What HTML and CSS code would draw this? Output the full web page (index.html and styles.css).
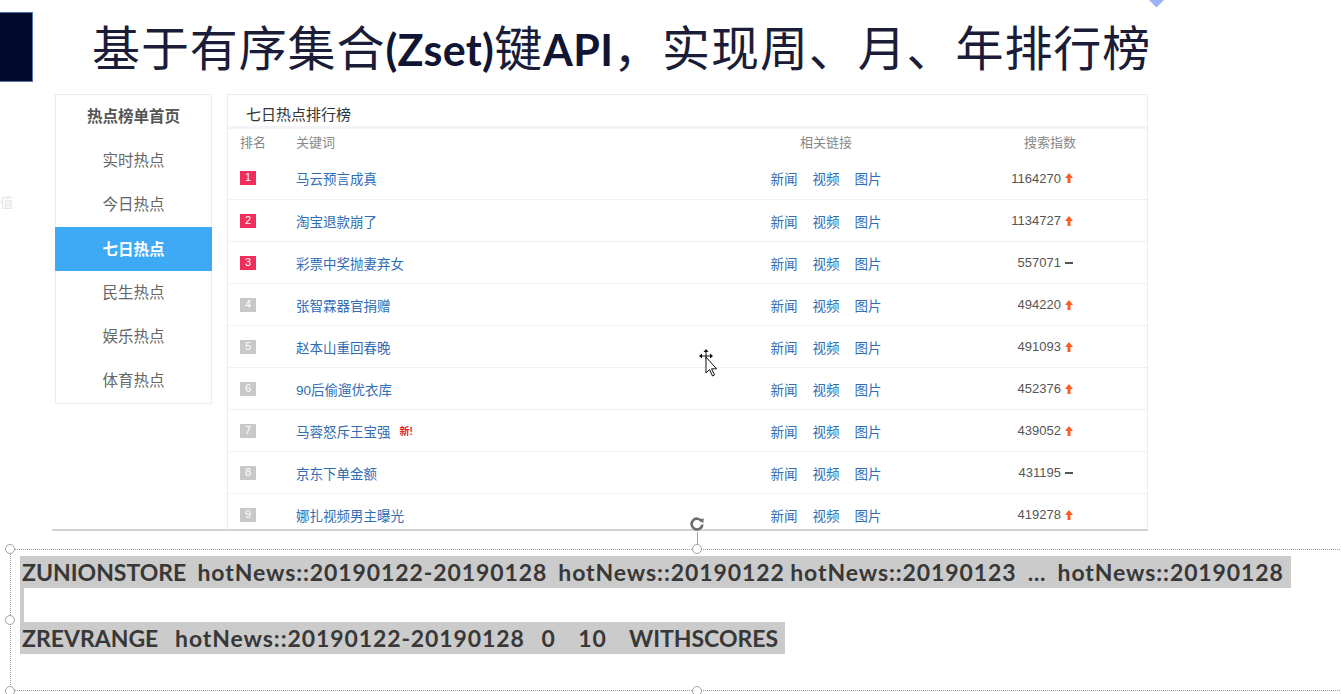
FILE: index.html
```html
<!DOCTYPE html>
<html lang="zh-CN">
<head>
<meta charset="utf-8">
<title>Zset 排行榜</title>
<link rel="stylesheet" href="styles.css">
</head>
<body>
<div class="slide">
  <div class="corner-logo"><span class="diamond"></span></div>
  <span class="edge-char">值</span>

  <header class="title-row">
    <div class="title-mark"></div>
    <h1 class="title">基于有序集合<b>(Zset)</b>键<b>API</b>，实现周、月、年排行榜</h1>
  </header>

  <div class="shot">
    <nav class="side">
      <div class="side-item side-head">热点榜单首页</div>
      <div class="side-item">实时热点</div>
      <div class="side-item">今日热点</div>
      <div class="side-item active">七日热点</div>
      <div class="side-item">民生热点</div>
      <div class="side-item">娱乐热点</div>
      <div class="side-item">体育热点</div>
    </nav>

    <section class="board">
      <div class="board-title">七日热点排行榜</div>
      <div class="grid head">
        <span>排名</span><span>关键词</span><span class="c">相关链接</span><span class="r">搜索指数</span>
      </div>

      <div class="grid row">
        <span><i class="rank hot">1</i></span>
        <span class="kw">马云预言成真</span>
        <span class="links"><a>新闻</a><a>视频</a><a>图片</a></span>
        <span class="num">1164270<svg class="up" viewBox="0 0 8 10"><polygon points="4,0 8,5 5.5,5 5.5,10 2.5,10 2.5,5 0,5"/></svg></span>
      </div>
      <div class="grid row">
        <span><i class="rank hot">2</i></span>
        <span class="kw">淘宝退款崩了</span>
        <span class="links"><a>新闻</a><a>视频</a><a>图片</a></span>
        <span class="num">1134727<svg class="up" viewBox="0 0 8 10"><polygon points="4,0 8,5 5.5,5 5.5,10 2.5,10 2.5,5 0,5"/></svg></span>
      </div>
      <div class="grid row">
        <span><i class="rank hot">3</i></span>
        <span class="kw">彩票中奖抛妻弃女</span>
        <span class="links"><a>新闻</a><a>视频</a><a>图片</a></span>
        <span class="num">557071<i class="flat"></i></span>
      </div>
      <div class="grid row">
        <span><i class="rank">4</i></span>
        <span class="kw">张智霖器官捐赠</span>
        <span class="links"><a>新闻</a><a>视频</a><a>图片</a></span>
        <span class="num">494220<svg class="up" viewBox="0 0 8 10"><polygon points="4,0 8,5 5.5,5 5.5,10 2.5,10 2.5,5 0,5"/></svg></span>
      </div>
      <div class="grid row">
        <span><i class="rank">5</i></span>
        <span class="kw">赵本山重回春晚</span>
        <span class="links"><a>新闻</a><a>视频</a><a>图片</a></span>
        <span class="num">491093<svg class="up" viewBox="0 0 8 10"><polygon points="4,0 8,5 5.5,5 5.5,10 2.5,10 2.5,5 0,5"/></svg></span>
      </div>
      <div class="grid row">
        <span><i class="rank">6</i></span>
        <span class="kw">90后偷遛优衣库</span>
        <span class="links"><a>新闻</a><a>视频</a><a>图片</a></span>
        <span class="num">452376<svg class="up" viewBox="0 0 8 10"><polygon points="4,0 8,5 5.5,5 5.5,10 2.5,10 2.5,5 0,5"/></svg></span>
      </div>
      <div class="grid row">
        <span><i class="rank">7</i></span>
        <span class="kw">马蓉怒斥王宝强<em class="new">新!</em></span>
        <span class="links"><a>新闻</a><a>视频</a><a>图片</a></span>
        <span class="num">439052<svg class="up" viewBox="0 0 8 10"><polygon points="4,0 8,5 5.5,5 5.5,10 2.5,10 2.5,5 0,5"/></svg></span>
      </div>
      <div class="grid row">
        <span><i class="rank">8</i></span>
        <span class="kw">京东下单金额</span>
        <span class="links"><a>新闻</a><a>视频</a><a>图片</a></span>
        <span class="num">431195<i class="flat"></i></span>
      </div>
      <div class="grid row">
        <span><i class="rank">9</i></span>
        <span class="kw">娜扎视频男主曝光</span>
        <span class="links"><a>新闻</a><a>视频</a><a>图片</a></span>
        <span class="num">419278<svg class="up" viewBox="0 0 8 10"><polygon points="4,0 8,5 5.5,5 5.5,10 2.5,10 2.5,5 0,5"/></svg></span>
      </div>
    </section>

    <svg class="cursor" viewBox="0 0 26 30" width="26" height="30">
      <g fill="#111">
        <polygon points="9,1 11.5,4 6.5,4"/>
        <polygon points="2,8 5,5.5 5,10.5"/>
        <polygon points="16,8 13,5.5 13,10.5"/>
        <rect x="8.5" y="3.5" width="1" height="8"/>
        <rect x="4.5" y="7.5" width="9" height="1"/>
      </g>
      <polygon points="9,9 9,25 12.5,21.5 15.5,28 17.5,27 14.5,20.8 19.5,20.8" fill="#fff" stroke="#111" stroke-width="1"/>
    </svg>
  </div>

  <div class="code-box">
    <div class="code-line"><span class="cmd">ZUNIONSTORE</span>  hotNews::20190122-20190128  hotNews::20190122 hotNews::20190123  …  hotNews::20190128</div>
    <div class="code-blank"></div>
    <div class="code-line"><span class="cmd">ZREVRANGE</span>   hotNews::20190122-20190128   0    10    <span class="cmd">WITHSCORES</span></div>

    <svg class="rot-icon" viewBox="0 0 16 16" width="16" height="16">
      <path d="M12.6 5.2 A5.4 5.4 0 1 0 13.4 8.6" fill="none" stroke="#6d6d6d" stroke-width="2.6"/>
      <polygon points="10.2,3.2 14.8,2.6 14.2,7.4" fill="#6d6d6d"/>
    </svg>
    <span class="rot-line"></span>
    <span class="handle h-tl"></span>
    <span class="handle h-tm"></span>
    <span class="handle h-ml"></span>
    <span class="handle h-bl"></span>
    <span class="handle h-bm"></span>
  </div>
</div>
</body>
</html>
```

FILE: styles.css
```css
html, body {
  margin: 0;
  padding: 0;
  background: #ffffff;
}

.slide {
  position: relative;
  width: 1341px;
  height: 694px;
  overflow: hidden;
  background: #ffffff;
  font-family: "Liberation Sans", "Noto Sans CJK SC", sans-serif;
}

/* faint fragments at the edges */
.corner-logo {
  position: absolute;
  left: 1148px;
  top: -13px;
}
.diamond {
  display: block;
  width: 17px;
  height: 17px;
  background: #9db2f4;
  transform: rotate(45deg);
}
.edge-char {
  position: absolute;
  left: 0;
  top: 192px;
  font: 13px "Noto Sans CJK SC", sans-serif;
  color: #e2e2e2;
}

/* title */
.title-row {
  display: flex;
  align-items: center;
  gap: 59px;
  margin-top: 12px;
  height: 70px;
}
.title-mark {
  width: 32px;
  height: 68px;
  background: #020a2c;
  border: 1px solid #5576ad;
  border-left: 0;
  flex: none;
}
.title {
  margin: 0;
  font-family: "Noto Sans CJK SC", sans-serif;
  font-weight: 400;
  font-size: 48px;
  line-height: 70px;
  color: #1b1d38;
  white-space: nowrap;
  letter-spacing: 0.9px;
}
.title b {
  font-family: "Lato", "Liberation Sans", sans-serif;
  font-weight: 700;
  font-size: 43px;
  color: #101533;
  letter-spacing: 0.3px;
}

/* screenshot of the web page */
.shot {
  position: relative;
  display: flex;
  align-items: flex-start;
  margin: 8px 0 0 52px;
  width: 1096px;
  height: 439px;
  border-bottom: 2px solid #d3d3d3;
  overflow: hidden;
}

.side {
  margin: 4px 0 0 3px;
  width: 155px;
  border: 1px solid #ececec;
  flex: none;
}
.side-item {
  height: 44px;
  line-height: 40px;
  text-align: center;
  font-family: "Noto Sans CJK SC", sans-serif;
  font-size: 15.5px;
  color: #666666;
}
.side-head {
  font-weight: 700;
  color: #555555;
}
.side-item.active {
  margin: 0 -1px;
  line-height: 43px;
  background: #3eaaf6;
  color: #ffffff;
  font-weight: 700;
}

.board {
  margin: 4px 0 0 15px;
  width: 919px;
  border: 1px solid #ececec;
  border-bottom: 0;
  flex: none;
  font-family: "Liberation Sans", "Noto Sans CJK SC", sans-serif;
}
.board-title {
  height: 27px;
  padding: 4px 0 0 18px;
  line-height: 29px;
  font-family: "Noto Sans CJK SC", sans-serif;
  font-size: 15px;
  color: #333333;
  border-bottom: 3px solid #f3f4f8;
}

.grid {
  display: grid;
  grid-template-columns: 56px 460px 140px 180px;
  align-items: center;
  padding-left: 12px;
}
.head {
  height: 28px;
  box-sizing: border-box;
  padding-bottom: 3px;
  font-size: 13px;
  color: #888888;
}
.head .c { text-align: center; }
.head .r { text-align: right; }

.row {
  height: 42px;
  box-sizing: border-box;
}
.row + .row {
  border-top: 1px dotted #e3e3e3;
}

.rank {
  display: block;
  width: 16px;
  height: 14px;
  line-height: 14px;
  text-align: center;
  font: normal 11px "Liberation Sans", sans-serif;
  color: #ffffff;
  background: #c8c8c8;
}
.rank.hot {
  background: #f02d5c;
}

.kw {
  font-size: 13.5px;
  color: #2f6db5;
  display: flex;
  align-items: center;
}
.new {
  margin-left: 9px;
  font-style: normal;
  font-weight: 700;
  font-size: 10px;
  color: #e6231d;
}

.links {
  display: flex;
  justify-content: center;
  gap: 15px;
  font-size: 13.5px;
  color: #2f6db5;
}

.num {
  display: flex;
  justify-content: flex-end;
  align-items: center;
  gap: 4px;
  padding-right: 3px;
  font-size: 13px;
  color: #555555;
}
.up {
  width: 8px;
  height: 10px;
  fill: #ff5d22;
}
.flat {
  display: block;
  width: 8px;
  height: 2px;
  background: #555555;
}

.cursor {
  position: absolute;
  left: 645px;
  top: 258px;
}

/* selected text box with the commands */
.code-box {
  position: relative;
  display: flex;
  flex-direction: column;
  align-items: flex-start;
  margin: 18px 0 0 10px;
  padding: 6px 0 0 9px;
  width: 1400px;
  height: 134px;
  border-top: 1px dotted #9a9a9a;
  border-left: 1px dotted #9a9a9a;
  border-bottom: 1px dotted #9a9a9a;
}
.code-line {
  height: 32px;
  line-height: 33px;
  padding: 0 7px 0 2px;
  background: #cbcbcb;
  font-family: "Lato", "Liberation Sans", sans-serif;
  font-weight: 700;
  font-size: 23px;
  color: #383838;
  white-space: pre;
  letter-spacing: 0.9px;
  word-spacing: -0.9px;
}
.cmd {
  letter-spacing: 0;
}
.code-blank {
  width: 4px;
  height: 34px;
  background: #cbcbcb;
}

.handle {
  position: absolute;
  width: 8px;
  height: 8px;
  border-radius: 50%;
  border: 1px solid #a3a3a3;
  background: #ffffff;
}
.h-tl { left: -6px; top: -6px; }
.h-tm { left: 681px; top: -6px; }
.h-ml { left: -6px; top: 65px; }
.h-bl { left: -6px; bottom: -6px; }
.h-bm { left: 681px; bottom: -6px; }

.rot-line {
  position: absolute;
  left: 686px;
  top: -18px;
  width: 1px;
  height: 13px;
  background: #a3a3a3;
}
.rot-icon {
  position: absolute;
  left: 678px;
  top: -34px;
}
```
